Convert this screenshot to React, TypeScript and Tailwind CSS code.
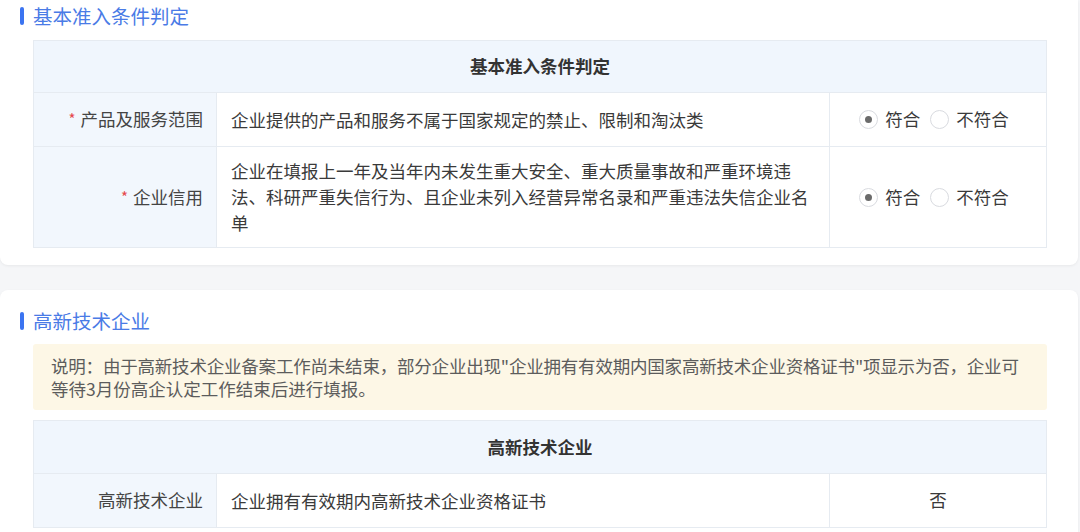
import React from 'react'

const font = { fontFamily: '"Noto Sans CJK SC", "Noto Sans", sans-serif' }

const Title: React.FC<{ text: string }> = ({ text }) => (
  <div className="flex items-center h-[30px] pl-[20px]">
    <span className="w-[4px] h-[18px] rounded-full bg-[#3b74f1] mr-[9px]" />
    <span className="text-[19.5px] leading-none text-[#4a7be6]">{text}</span>
  </div>
)

const Radio: React.FC<{ checked?: boolean; label: string }> = ({ checked, label }) => (
  <label className="flex items-center gap-[7px]">
    <span className="w-[19px] h-[19px] rounded-full border border-[#d9dbe0] bg-white flex items-center justify-center">
      {checked && <span className="w-[7px] h-[7px] rounded-full bg-[#6b6b6b]" />}
    </span>
    <span>{label}</span>
  </label>
)

const Row: React.FC<{ label: string; required?: boolean; content: React.ReactNode; right: React.ReactNode; tall?: boolean }> = ({ label, required, content, right, tall }) => (
  <div className="grid grid-cols-[182px_613px_1fr] border-t border-[#e6ebf1]">
    <div className="bg-[#f2f7fd] flex items-center justify-end pr-[13px] text-[#444]">
      {required && <span className="text-[#e5484d] mr-[5px] text-[15px]">*</span>}
      {label}
    </div>
    <div className={`border-l border-[#e6ebf1] px-[14px] flex items-center text-[#3a3a3a] leading-[26px] ${tall ? 'py-[11px]' : 'h-[53px]'}`}>
      {content}
    </div>
    <div className="border-l border-[#e6ebf1] flex items-center justify-center text-[#3a3a3a]">{right}</div>
  </div>
)

const Choice: React.FC = () => (
  <div className="flex items-center gap-[10px] -ml-[8px]">
    <Radio checked label="符合" />
    <Radio label="不符合" />
  </div>
)

export default function App() {
  return (
    <div className="min-h-screen bg-[#f5f6f8] text-[17.5px]" style={font}>
      <div className="w-[1078px] bg-white rounded-b-[8px] shadow-[0_1px_3px_rgba(0,0,0,0.06)] pt-[1px] pb-[17px]">
        <Title text="基本准入条件判定" />
        <div className="mx-[33px] mt-[9px] border border-[#e6ebf1] w-[1014px]">
          <div className="h-[51px] bg-[#f0f6fd] flex items-center justify-center font-bold text-[#333]">基本准入条件判定</div>
          <Row required label="产品及服务范围" content="企业提供的产品和服务不属于国家规定的禁止、限制和淘汰类" right={<Choice />} />
          <Row
            required
            tall
            label="企业信用"
            content="企业在填报上一年及当年内未发生重大安全、重大质量事故和严重环境违法、科研严重失信行为、且企业未列入经营异常名录和严重违法失信企业名单"
            right={<Choice />}
          />
        </div>
      </div>

      <div className="w-[1078px] bg-white rounded-[8px] shadow-[0_1px_3px_rgba(0,0,0,0.06)] mt-[25px] pt-[16px] pb-[20px]">
        <Title text="高新技术企业" />
        <div className="mx-[33px] mt-[8px] w-[1014px] bg-[#fdf7e6] rounded-[3px] px-[18px] py-[10px] text-[#5c5c5c] leading-[23px]">
          <div className="whitespace-nowrap tracking-[-0.2px]">说明：由于高新技术企业备案工作尚未结束，部分企业出现"企业拥有有效期内国家高新技术企业资格证书"项显示为否，企业可</div>
          <div>等待3月份高企认定工作结束后进行填报。</div>
        </div>
        <div className="mx-[33px] mt-[10px] border border-[#e6ebf1] w-[1014px]">
          <div className="h-[52px] bg-[#f0f6fd] flex items-center justify-center font-bold text-[#333]">高新技术企业</div>
          <Row label="高新技术企业" content="企业拥有有效期内高新技术企业资格证书" right={<span>否</span>} />
        </div>
      </div>
    </div>
  )
}
